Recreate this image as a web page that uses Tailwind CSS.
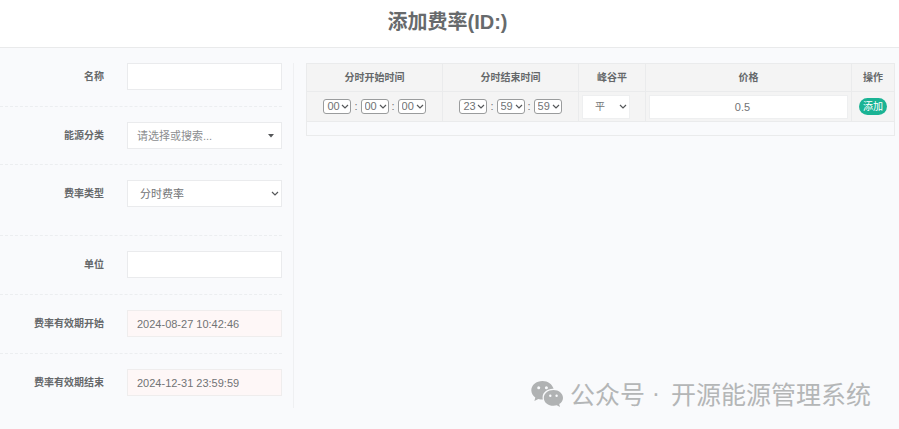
<!DOCTYPE html>
<html lang="zh-CN">
<head>
    <meta charset="UTF-8">
    <meta name="viewport" content="width=device-width, initial-scale=1.0">
    <title>添加费率</title>
    <script src="https://cdn.jsdelivr.net/npm/@tailwindcss/browser@4"></script>
</head>
<body class="relative min-h-screen bg-[#f9fafc] font-['Liberation_Sans','Noto_Sans_CJK_SC',sans-serif] text-[11px] leading-4 text-[#717375]">
    <header class="flex h-12 items-start justify-center border-b border-[#e9eaeb] bg-white pt-2 pr-1">
        <h1 class="text-[20px] leading-7 font-bold text-[#676a6c]">添加费率(ID:)</h1>
    </header>

    <main class="grid grid-cols-[294px_1fr] pt-[15px]">
        <form class="h-[345px] border-r border-[#eff0f2] pr-[11px]">
            <div class="flex border-b border-dashed border-[#eceef0] pb-4">
                <label for="name" class="w-[104px] pt-[6px] text-right text-[10px] leading-4 font-bold text-[#65686a]">名称</label>
                <input id="name" type="text" class="ml-[23px] h-[27px] min-w-0 flex-1 border border-[#eaebed] bg-white px-[9px]">
            </div>

            <div class="mt-[15px] flex border-b border-dashed border-[#eceef0] pb-[15px]">
                <label for="category" class="w-[104px] pt-[6px] text-right text-[10px] leading-4 font-bold text-[#65686a]">能源分类</label>
                <div class="relative ml-[23px] flex-1">
                    <select id="category" class="block h-[27px] w-full appearance-none border border-[#eaebed] bg-white px-[9px] text-[#8b8d8f]">
                        <option>请选择或搜索...</option>
                    </select>
                    <svg class="pointer-events-none absolute top-3 right-2 h-1 w-[6px] fill-[#555759]" viewBox="0 0 6 4"><path d="M0 0h6L3 3.5z"/></svg>
                </div>
            </div>

            <div class="mt-[15px] flex border-b border-dashed border-[#eceef0] pb-7">
                <label for="type" class="w-[104px] pt-[6px] text-right text-[10px] leading-4 font-bold text-[#65686a]">费率类型</label>
                <div class="relative ml-[23px] flex-1">
                    <select id="type" class="block h-[27px] w-full appearance-none border border-[#eaebed] bg-white px-3">
                        <option>分时费率</option>
                    </select>
                    <svg class="pointer-events-none absolute top-[11px] right-[3px] h-[5px] w-2 fill-none stroke-[#555759] stroke-[1.2]" viewBox="0 0 8 5"><path d="M1 1l3 3 3-3"/></svg>
                </div>
            </div>

            <div class="mt-[15px] flex border-b border-dashed border-[#eceef0] pb-4">
                <label for="unit" class="w-[104px] pt-[6px] text-right text-[10px] leading-4 font-bold text-[#65686a]">单位</label>
                <input id="unit" type="text" class="ml-[23px] h-[27px] min-w-0 flex-1 border border-[#eaebed] bg-white px-[9px]">
            </div>

            <div class="mt-[15px] flex border-b border-dashed border-[#eceef0] pb-4">
                <label for="start" class="w-[104px] pt-[6px] text-right text-[10px] leading-4 font-bold text-[#65686a]">费率有效期开始</label>
                <input id="start" type="text" value="2024-08-27 10:42:46" class="ml-[23px] h-[27px] min-w-0 flex-1 border border-[#efeded] bg-[#fef7f7] px-[9px]">
            </div>

            <div class="mt-[15px] flex">
                <label for="end" class="w-[104px] pt-[6px] text-right text-[10px] leading-4 font-bold text-[#65686a]">费率有效期结束</label>
                <input id="end" type="text" value="2024-12-31 23:59:59" class="ml-[23px] h-[27px] min-w-0 flex-1 border border-[#efeded] bg-[#fef7f7] px-[9px]">
            </div>
        </form>

        <section class="pr-1 pl-3">
            <table class="w-full table-fixed border-collapse text-center">
                <thead class="bg-[#f4f4f4] text-[10px] text-[#65686a]">
                    <tr class="h-7">
                        <th class="w-[136px] border border-[#eaebec] p-0">分时开始时间</th>
                        <th class="w-[136px] border border-[#eaebec] p-0">分时结束时间</th>
                        <th class="w-[67px] border border-[#eaebec] p-0">峰谷平</th>
                        <th class="border border-[#eaebec] p-0">价格</th>
                        <th class="w-[43px] border border-[#eaebec] p-0">操作</th>
                    </tr>
                </thead>
                <tbody>
                    <tr class="h-[30px] bg-[#f4f4f4]">
                        <td class="border border-[#eaebec] p-0">
                            <div class="flex items-center justify-center gap-[3px]" data-time="00:00:00"></div>
                        </td>
                        <td class="border border-[#eaebec] p-0">
                            <div class="flex items-center justify-center gap-[3px]" data-time="23:59:59"></div>
                        </td>
                        <td class="border border-[#eaebec] p-0">
                            <div class="relative ml-[3px] w-12">
                                <select aria-label="峰谷平" class="block h-6 w-full appearance-none border border-[#eeeff0] bg-white px-3 text-[10px]">
                                    <option>平</option>
                                </select>
                                <svg class="pointer-events-none absolute top-[9px] right-[3px] h-[5px] w-2 fill-none stroke-[#555759] stroke-[1.2]" viewBox="0 0 8 5"><path d="M1 1l3 3 3-3"/></svg>
                            </div>
                        </td>
                        <td class="border border-[#eaebec] px-[3px] py-0">
                            <input type="text" aria-label="价格" value="0.5" class="block h-6 w-full border border-[#eeeff0] bg-white pr-3 text-center">
                        </td>
                        <td class="border border-[#eaebec] p-0">
                            <button type="button" class="mx-auto block h-[17px] w-7 rounded-full bg-[#1ab394] text-[10px] leading-[17px] text-white">添加</button>
                        </td>
                    </tr>
                    <tr class="h-[14px]">
                        <td colspan="5" class="border border-[#eaebec] p-0"></td>
                    </tr>
                </tbody>
            </table>
        </section>
    </main>

    <!-- watermark -->
    <div class="pointer-events-none absolute right-7 bottom-[18px] flex items-center gap-[6px] text-[#b4b6b7]">
        <svg class="h-[27px] w-[33px]" viewBox="0 0 33 27">
            <path fill="#b0b2b3" d="M11.500 1C5.200 1 .3 5.100.3 10.300c0 2.900 1.500 5.400 4 7.200L3.400 21l3.900-2.100c1.500.4 3 .6 4.600.6a9 9 0 0 1-.3-2.300c0-4.700 4.600-8.400 10.200-8.400h.8C21.300 4.300 16.900 1 11.500 1z"/>
            <path fill="#b0b2b3" d="M22.500 10c-5.400 0-9.700 3.500-9.700 7.900s4.300 7.900 9.700 7.900c1.100 0 2.200-.2 3.300-.5l3.200 1.700-.8-2.900c2.300-1.400 3.800-3.700 3.800-6.200 0-4.400-4.200-7.900-9.500-7.900z"/>
            <g fill="#f9fafc">
                <circle cx="7.700" cy="7.700" r="1.500"/>
                <circle cx="15.400" cy="7.700" r="1.500"/>
                <circle cx="19.300" cy="15.700" r="1.200"/>
                <circle cx="25.600" cy="15.700" r="1.200"/>
            </g>
        </svg>
        <span class="flex text-[25px] leading-9 font-normal font-['Noto_Sans_CJK_SC',sans-serif]">
            <span>公众号</span><span class="w-[26px] pr-1 text-center font-['Liberation_Sans',sans-serif]">·</span><span>开源能源管理系统</span>
        </span>
    </div>

    <script>
        // Build the hour / minute / second pickers
        document.querySelectorAll('[data-time]').forEach(box => {
            const names = ['时', '分', '秒'];
            box.innerHTML = box.dataset.time.split(':').map((value, i) => `
                <div class="relative w-7">
                    <select aria-label="${names[i]}" class="block h-[15px] w-full appearance-none rounded-[3px] border border-[#9a9c9d] bg-white pl-[3px] leading-[13px]">
                        <option>${value}</option>
                    </select>
                    <svg class="pointer-events-none absolute top-[5px] right-[2px] h-[5px] w-2 fill-none stroke-[#555759] stroke-[1.2]" viewBox="0 0 8 5"><path d="M1 1l3 3 3-3"/></svg>
                </div>`).join('<span class="leading-[15px]">:</span>');
        });
    </script>
</body>
</html>
